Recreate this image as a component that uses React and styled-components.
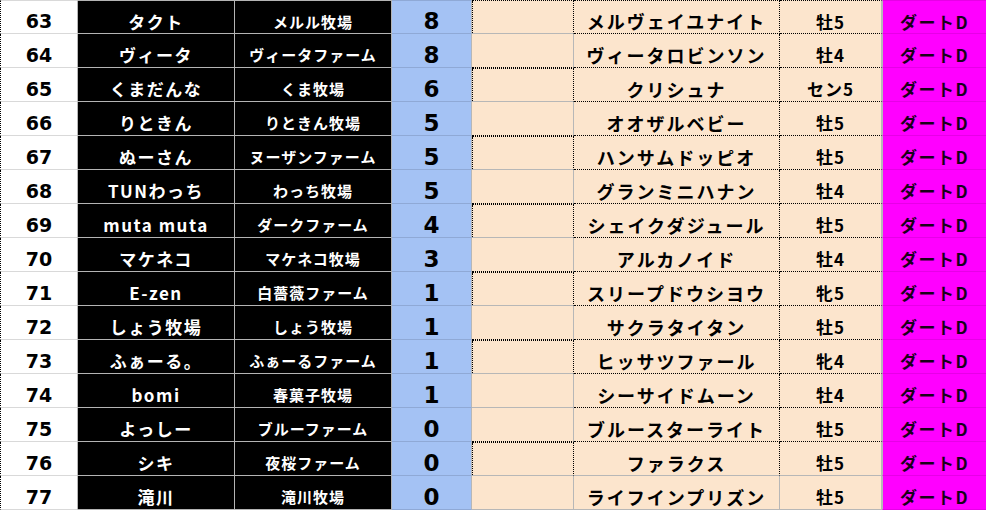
import React from 'react';
import styled, { createGlobalStyle } from 'styled-components';

const rows = [
  [63, 'タクト', 'メルル牧場', 8, 'メルヴェイユナイト', '牡5'],
  [64, 'ヴィータ', 'ヴィータファーム', 8, 'ヴィータロビンソン', '牡4'],
  [65, 'くまだんな', 'くま牧場', 6, 'クリシュナ', 'セン5'],
  [66, 'りときん', 'りときん牧場', 5, 'オオザルベビー', '牡5'],
  [67, 'ぬーさん', 'ヌーザンファーム', 5, 'ハンサムドッピオ', '牡5'],
  [68, 'TUNわっち', 'わっち牧場', 5, 'グランミニハナン', '牡4'],
  [69, 'muta muta', 'ダークファーム', 4, 'シェイクダジュール', '牡5'],
  [70, 'マケネコ', 'マケネコ牧場', 3, 'アルカノイド', '牡4'],
  [71, 'E-zen', '白薔薇ファーム', 1, 'スリープドウシヨウ', '牝5'],
  [72, 'しょう牧場', 'しょう牧場', 1, 'サクラタイタン', '牡5'],
  [73, 'ふぁーる。', 'ふぁーるファーム', 1, 'ヒッサツファール', '牝4'],
  [74, 'bomi', '春菓子牧場', 1, 'シーサイドムーン', '牡4'],
  [75, 'よっしー', 'ブルーファーム', 0, 'ブルースターライト', '牡5'],
  [76, 'シキ', '夜桜ファーム', 0, 'ファラクス', '牡5'],
  [77, '滝川', '滝川牧場', 0, 'ライフインプリズン', '牡5']
];

// rows whose empty peach cell carries a dotted box
const dottedBox = [63, 65, 67, 69, 71, 73, 76];

const GlobalStyle = createGlobalStyle`
  html, body {
    margin: 0;
    padding: 0;
    background: #ffffff;
  }
  body {
    font-family: 'Noto Sans CJK JP', 'Noto Sans', sans-serif;
  }
`;

const Sheet = styled.div`
  display: grid;
  grid-template-columns: 78px 157px 157px 80px 102px 206px 102px 104px;
  grid-auto-rows: 34px;
  width: 986px;
`;

const Cell = styled.div`
  box-sizing: border-box;
  display: flex;
  align-items: center;
  justify-content: center;
  padding-top: 8px;
  font-weight: 700;
  white-space: nowrap;
  border-right: 1px solid #c0c0c0;
  border-bottom: 1px solid #c0c0c0;
  border-top: ${p => (p.$first ? '1px solid #c0c0c0' : 'none')};
`;

const RankCell = styled(Cell)`
  background: #ffffff;
  color: #000;
  font-family: 'DejaVu Sans', sans-serif;
  font-size: 19px;
  border-left: 1px dotted #000;
  border-bottom-color: #d9d9d9;
  border-top-color: #d9d9d9;
  border-right-color: #b7b7b7;
`;

const DarkCell = styled(Cell)`
  background: #000000;
  color: #ffffff;
  font-size: ${p => (p.$small ? '15px' : '17px')};
  letter-spacing: ${p => (p.$small ? '1px' : '1.5px')};
  border-color: #b4b4b4;
`;

const PointCell = styled(Cell)`
  background: #a4c2f4;
  color: #000;
  font-family: 'DejaVu Sans', sans-serif;
  font-size: 23px;
  border-bottom-color: #8fa9d6;
  border-right-color: #b7b7b7;
  border-top-color: #8fa9d6;
`;

const PeachCell = styled(Cell)`
  background: #fce5cd;
  color: #000;
  font-size: ${p => (p.$size ? p.$size : '17px')};
  letter-spacing: ${p => (p.$spread ? p.$spread : '0')};
  border-color: #b7b7b7;
  ${p => p.$dotTop && 'border-top: 1px dotted #000;'}
  ${p => p.$dotRight && 'border-right: 1px dotted #000;'}
  ${p => p.$dotBottom && 'border-bottom: 1px dotted #000;'}
`;

const DirtCell = styled(Cell)`
  background: #ff00ff;
  color: #1a001a;
  font-size: 17px;
  letter-spacing: 1.5px;
  border-right: none;
  border-bottom-color: #e600e6;
  border-left: 1px solid #b7b7b7;
  border-top-color: #e600e6;
`;

const Gap = styled.div`
  box-sizing: border-box;
  height: 100%;
  width: 100%;
  border-left: ${p => (p.$dotted ? '1px dotted #000' : 'none')};
`;

export default function App() {
  return (
    <>
      <GlobalStyle />
      <Sheet>
        {rows.map(([rank, owner, farm, pts, horse, sex], i) => {
          const first = i === 0;
          const box = dottedBox.includes(rank);
          const last = rank === 77;
          const nextBox = dottedBox.includes(rank + 1);
          return (
            <React.Fragment key={rank}>
              <RankCell $first={first}>{rank}</RankCell>
              <DarkCell $first={first}>{owner}</DarkCell>
              <DarkCell $first={first} $small>{farm}</DarkCell>
              <PointCell $first={first}>{pts}</PointCell>
              <PeachCell
                $first={first}
                $dotTop={box}
                $dotRight={box}
                $dotBottom={nextBox}
                style={{ padding: 0 }}
              >
                <Gap $dotted={box} />
              </PeachCell>
              <PeachCell
                $first={first}
                $dotTop={first}
                $dotRight={!last}
                $dotBottom={rank < 76}
                $size="18px"
                $spread="2px"
              >
                {horse}
              </PeachCell>
              <PeachCell
                $first={first}
                $dotTop={first}
                $dotBottom={rank < 76}
                $spread="1px"
              >
                {sex}
              </PeachCell>
              <DirtCell $first={first}>ダートD</DirtCell>
            </React.Fragment>
          );
        })}
      </Sheet>
    </>
  );
}
